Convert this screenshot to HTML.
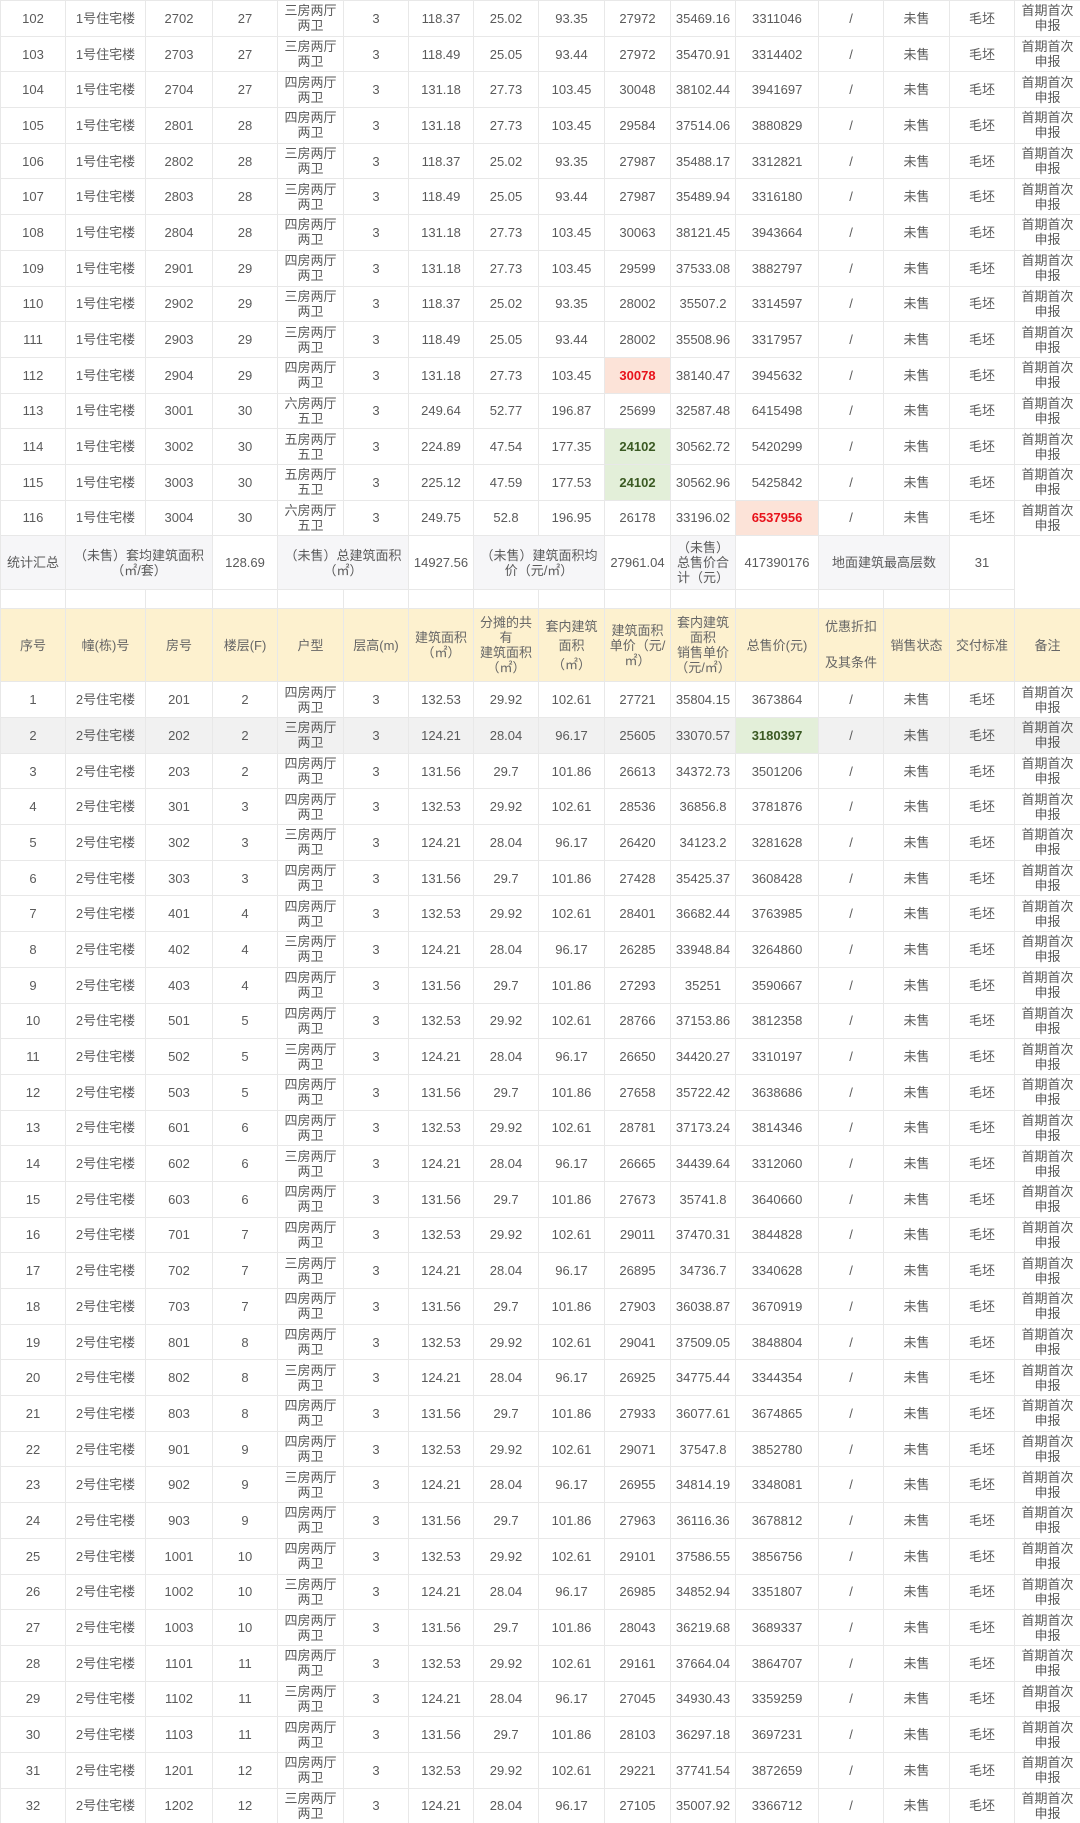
<!DOCTYPE html>
<html><head><meta charset="utf-8"><style>
html,body{margin:0;padding:0;background:#fff;width:1080px;height:1823px;overflow:hidden}
table{border-collapse:collapse;table-layout:fixed;width:1080px;font-family:"Liberation Sans","Noto Sans CJK SC",sans-serif;font-size:13px;color:#5a5a5a}
td{border:1px solid #e8e8e8;text-align:center;vertical-align:middle;padding:0;line-height:15px;overflow:hidden;white-space:nowrap}
tr{height:35.7px}
tr.s{height:54px}
tr.s td.l{background:#f6f6f8}
tr.b{height:19px}
tr.h{height:73px}
tr.h td{background:#fdf1cf;color:#666}
tr.g td{background:#f1f1f1}
.r{background:#fce3d8!important;color:#e8121b;font-weight:bold}
.gr{background:#e3efd9!important;color:#3b5a23;font-weight:bold}
</style></head><body>
<table>
<colgroup><col style="width:65px"><col style="width:80px"><col style="width:67px"><col style="width:65px"><col style="width:66px"><col style="width:65px"><col style="width:65px"><col style="width:65px"><col style="width:66px"><col style="width:66px"><col style="width:65px"><col style="width:83px"><col style="width:65px"><col style="width:66px"><col style="width:65px"><col style="width:66px"></colgroup>
<tr><td>102</td><td>1号住宅楼</td><td>2702</td><td>27</td><td>三房两厅<br>两卫</td><td>3</td><td>118.37</td><td>25.02</td><td>93.35</td><td>27972</td><td>35469.16</td><td>3311046</td><td>/</td><td>未售</td><td>毛坯</td><td>首期首次<br>申报</td></tr>
<tr><td>103</td><td>1号住宅楼</td><td>2703</td><td>27</td><td>三房两厅<br>两卫</td><td>3</td><td>118.49</td><td>25.05</td><td>93.44</td><td>27972</td><td>35470.91</td><td>3314402</td><td>/</td><td>未售</td><td>毛坯</td><td>首期首次<br>申报</td></tr>
<tr><td>104</td><td>1号住宅楼</td><td>2704</td><td>27</td><td>四房两厅<br>两卫</td><td>3</td><td>131.18</td><td>27.73</td><td>103.45</td><td>30048</td><td>38102.44</td><td>3941697</td><td>/</td><td>未售</td><td>毛坯</td><td>首期首次<br>申报</td></tr>
<tr><td>105</td><td>1号住宅楼</td><td>2801</td><td>28</td><td>四房两厅<br>两卫</td><td>3</td><td>131.18</td><td>27.73</td><td>103.45</td><td>29584</td><td>37514.06</td><td>3880829</td><td>/</td><td>未售</td><td>毛坯</td><td>首期首次<br>申报</td></tr>
<tr><td>106</td><td>1号住宅楼</td><td>2802</td><td>28</td><td>三房两厅<br>两卫</td><td>3</td><td>118.37</td><td>25.02</td><td>93.35</td><td>27987</td><td>35488.17</td><td>3312821</td><td>/</td><td>未售</td><td>毛坯</td><td>首期首次<br>申报</td></tr>
<tr><td>107</td><td>1号住宅楼</td><td>2803</td><td>28</td><td>三房两厅<br>两卫</td><td>3</td><td>118.49</td><td>25.05</td><td>93.44</td><td>27987</td><td>35489.94</td><td>3316180</td><td>/</td><td>未售</td><td>毛坯</td><td>首期首次<br>申报</td></tr>
<tr><td>108</td><td>1号住宅楼</td><td>2804</td><td>28</td><td>四房两厅<br>两卫</td><td>3</td><td>131.18</td><td>27.73</td><td>103.45</td><td>30063</td><td>38121.45</td><td>3943664</td><td>/</td><td>未售</td><td>毛坯</td><td>首期首次<br>申报</td></tr>
<tr><td>109</td><td>1号住宅楼</td><td>2901</td><td>29</td><td>四房两厅<br>两卫</td><td>3</td><td>131.18</td><td>27.73</td><td>103.45</td><td>29599</td><td>37533.08</td><td>3882797</td><td>/</td><td>未售</td><td>毛坯</td><td>首期首次<br>申报</td></tr>
<tr><td>110</td><td>1号住宅楼</td><td>2902</td><td>29</td><td>三房两厅<br>两卫</td><td>3</td><td>118.37</td><td>25.02</td><td>93.35</td><td>28002</td><td>35507.2</td><td>3314597</td><td>/</td><td>未售</td><td>毛坯</td><td>首期首次<br>申报</td></tr>
<tr><td>111</td><td>1号住宅楼</td><td>2903</td><td>29</td><td>三房两厅<br>两卫</td><td>3</td><td>118.49</td><td>25.05</td><td>93.44</td><td>28002</td><td>35508.96</td><td>3317957</td><td>/</td><td>未售</td><td>毛坯</td><td>首期首次<br>申报</td></tr>
<tr><td>112</td><td>1号住宅楼</td><td>2904</td><td>29</td><td>四房两厅<br>两卫</td><td>3</td><td>131.18</td><td>27.73</td><td>103.45</td><td class="r">30078</td><td>38140.47</td><td>3945632</td><td>/</td><td>未售</td><td>毛坯</td><td>首期首次<br>申报</td></tr>
<tr><td>113</td><td>1号住宅楼</td><td>3001</td><td>30</td><td>六房两厅<br>五卫</td><td>3</td><td>249.64</td><td>52.77</td><td>196.87</td><td>25699</td><td>32587.48</td><td>6415498</td><td>/</td><td>未售</td><td>毛坯</td><td>首期首次<br>申报</td></tr>
<tr><td>114</td><td>1号住宅楼</td><td>3002</td><td>30</td><td>五房两厅<br>五卫</td><td>3</td><td>224.89</td><td>47.54</td><td>177.35</td><td class="gr">24102</td><td>30562.72</td><td>5420299</td><td>/</td><td>未售</td><td>毛坯</td><td>首期首次<br>申报</td></tr>
<tr><td>115</td><td>1号住宅楼</td><td>3003</td><td>30</td><td>五房两厅<br>五卫</td><td>3</td><td>225.12</td><td>47.59</td><td>177.53</td><td class="gr">24102</td><td>30562.96</td><td>5425842</td><td>/</td><td>未售</td><td>毛坯</td><td>首期首次<br>申报</td></tr>
<tr><td>116</td><td>1号住宅楼</td><td>3004</td><td>30</td><td>六房两厅<br>五卫</td><td>3</td><td>249.75</td><td>52.8</td><td>196.95</td><td>26178</td><td>33196.02</td><td class="r">6537956</td><td>/</td><td>未售</td><td>毛坯</td><td>首期首次<br>申报</td></tr>
<tr class="s"><td class="l">统计汇总</td><td class="l" colspan="2">（未售）套均建筑面积<br>（㎡/套）</td><td>128.69</td><td class="l" colspan="2">（未售）总建筑面积<br>（㎡）</td><td>14927.56</td><td class="l" colspan="2">（未售）建筑面积均<br>价（元/㎡）</td><td>27961.04</td><td class="l">（未售）<br>总售价合<br>计（元）</td><td>417390176</td><td class="l" colspan="2">地面建筑最高层数</td><td>31</td><td rowspan="2" style="border-bottom:none"></td></tr>
<tr class="b"><td></td><td></td><td></td><td></td><td></td><td></td><td></td><td></td><td></td><td></td><td></td><td></td><td></td><td></td><td></td></tr>
<tr class="h"><td>序号</td><td>幢(栋)号</td><td>房号</td><td>楼层(F)</td><td>户型</td><td>层高(m)</td><td>建筑面积<br>（㎡）</td><td>分摊的共<br>有<br>建筑面积<br>（㎡）</td><td style="line-height:19px">套内建筑<br>面积<br>（㎡）</td><td>建筑面积<br>单价（元/<br>㎡）</td><td>套内建筑<br>面积<br>销售单价<br>（元/㎡）</td><td>总售价(元)</td><td style="line-height:36px">优惠折扣<br>及其条件</td><td>销售状态</td><td>交付标准</td><td>备注</td></tr>
<tr><td>1</td><td>2号住宅楼</td><td>201</td><td>2</td><td>四房两厅<br>两卫</td><td>3</td><td>132.53</td><td>29.92</td><td>102.61</td><td>27721</td><td>35804.15</td><td>3673864</td><td>/</td><td>未售</td><td>毛坯</td><td>首期首次<br>申报</td></tr>
<tr class="g"><td>2</td><td>2号住宅楼</td><td>202</td><td>2</td><td>三房两厅<br>两卫</td><td>3</td><td>124.21</td><td>28.04</td><td>96.17</td><td>25605</td><td>33070.57</td><td class="gr">3180397</td><td>/</td><td>未售</td><td>毛坯</td><td>首期首次<br>申报</td></tr>
<tr><td>3</td><td>2号住宅楼</td><td>203</td><td>2</td><td>四房两厅<br>两卫</td><td>3</td><td>131.56</td><td>29.7</td><td>101.86</td><td>26613</td><td>34372.73</td><td>3501206</td><td>/</td><td>未售</td><td>毛坯</td><td>首期首次<br>申报</td></tr>
<tr><td>4</td><td>2号住宅楼</td><td>301</td><td>3</td><td>四房两厅<br>两卫</td><td>3</td><td>132.53</td><td>29.92</td><td>102.61</td><td>28536</td><td>36856.8</td><td>3781876</td><td>/</td><td>未售</td><td>毛坯</td><td>首期首次<br>申报</td></tr>
<tr><td>5</td><td>2号住宅楼</td><td>302</td><td>3</td><td>三房两厅<br>两卫</td><td>3</td><td>124.21</td><td>28.04</td><td>96.17</td><td>26420</td><td>34123.2</td><td>3281628</td><td>/</td><td>未售</td><td>毛坯</td><td>首期首次<br>申报</td></tr>
<tr><td>6</td><td>2号住宅楼</td><td>303</td><td>3</td><td>四房两厅<br>两卫</td><td>3</td><td>131.56</td><td>29.7</td><td>101.86</td><td>27428</td><td>35425.37</td><td>3608428</td><td>/</td><td>未售</td><td>毛坯</td><td>首期首次<br>申报</td></tr>
<tr><td>7</td><td>2号住宅楼</td><td>401</td><td>4</td><td>四房两厅<br>两卫</td><td>3</td><td>132.53</td><td>29.92</td><td>102.61</td><td>28401</td><td>36682.44</td><td>3763985</td><td>/</td><td>未售</td><td>毛坯</td><td>首期首次<br>申报</td></tr>
<tr><td>8</td><td>2号住宅楼</td><td>402</td><td>4</td><td>三房两厅<br>两卫</td><td>3</td><td>124.21</td><td>28.04</td><td>96.17</td><td>26285</td><td>33948.84</td><td>3264860</td><td>/</td><td>未售</td><td>毛坯</td><td>首期首次<br>申报</td></tr>
<tr><td>9</td><td>2号住宅楼</td><td>403</td><td>4</td><td>四房两厅<br>两卫</td><td>3</td><td>131.56</td><td>29.7</td><td>101.86</td><td>27293</td><td>35251</td><td>3590667</td><td>/</td><td>未售</td><td>毛坯</td><td>首期首次<br>申报</td></tr>
<tr><td>10</td><td>2号住宅楼</td><td>501</td><td>5</td><td>四房两厅<br>两卫</td><td>3</td><td>132.53</td><td>29.92</td><td>102.61</td><td>28766</td><td>37153.86</td><td>3812358</td><td>/</td><td>未售</td><td>毛坯</td><td>首期首次<br>申报</td></tr>
<tr><td>11</td><td>2号住宅楼</td><td>502</td><td>5</td><td>三房两厅<br>两卫</td><td>3</td><td>124.21</td><td>28.04</td><td>96.17</td><td>26650</td><td>34420.27</td><td>3310197</td><td>/</td><td>未售</td><td>毛坯</td><td>首期首次<br>申报</td></tr>
<tr><td>12</td><td>2号住宅楼</td><td>503</td><td>5</td><td>四房两厅<br>两卫</td><td>3</td><td>131.56</td><td>29.7</td><td>101.86</td><td>27658</td><td>35722.42</td><td>3638686</td><td>/</td><td>未售</td><td>毛坯</td><td>首期首次<br>申报</td></tr>
<tr><td>13</td><td>2号住宅楼</td><td>601</td><td>6</td><td>四房两厅<br>两卫</td><td>3</td><td>132.53</td><td>29.92</td><td>102.61</td><td>28781</td><td>37173.24</td><td>3814346</td><td>/</td><td>未售</td><td>毛坯</td><td>首期首次<br>申报</td></tr>
<tr><td>14</td><td>2号住宅楼</td><td>602</td><td>6</td><td>三房两厅<br>两卫</td><td>3</td><td>124.21</td><td>28.04</td><td>96.17</td><td>26665</td><td>34439.64</td><td>3312060</td><td>/</td><td>未售</td><td>毛坯</td><td>首期首次<br>申报</td></tr>
<tr><td>15</td><td>2号住宅楼</td><td>603</td><td>6</td><td>四房两厅<br>两卫</td><td>3</td><td>131.56</td><td>29.7</td><td>101.86</td><td>27673</td><td>35741.8</td><td>3640660</td><td>/</td><td>未售</td><td>毛坯</td><td>首期首次<br>申报</td></tr>
<tr><td>16</td><td>2号住宅楼</td><td>701</td><td>7</td><td>四房两厅<br>两卫</td><td>3</td><td>132.53</td><td>29.92</td><td>102.61</td><td>29011</td><td>37470.31</td><td>3844828</td><td>/</td><td>未售</td><td>毛坯</td><td>首期首次<br>申报</td></tr>
<tr><td>17</td><td>2号住宅楼</td><td>702</td><td>7</td><td>三房两厅<br>两卫</td><td>3</td><td>124.21</td><td>28.04</td><td>96.17</td><td>26895</td><td>34736.7</td><td>3340628</td><td>/</td><td>未售</td><td>毛坯</td><td>首期首次<br>申报</td></tr>
<tr><td>18</td><td>2号住宅楼</td><td>703</td><td>7</td><td>四房两厅<br>两卫</td><td>3</td><td>131.56</td><td>29.7</td><td>101.86</td><td>27903</td><td>36038.87</td><td>3670919</td><td>/</td><td>未售</td><td>毛坯</td><td>首期首次<br>申报</td></tr>
<tr><td>19</td><td>2号住宅楼</td><td>801</td><td>8</td><td>四房两厅<br>两卫</td><td>3</td><td>132.53</td><td>29.92</td><td>102.61</td><td>29041</td><td>37509.05</td><td>3848804</td><td>/</td><td>未售</td><td>毛坯</td><td>首期首次<br>申报</td></tr>
<tr><td>20</td><td>2号住宅楼</td><td>802</td><td>8</td><td>三房两厅<br>两卫</td><td>3</td><td>124.21</td><td>28.04</td><td>96.17</td><td>26925</td><td>34775.44</td><td>3344354</td><td>/</td><td>未售</td><td>毛坯</td><td>首期首次<br>申报</td></tr>
<tr><td>21</td><td>2号住宅楼</td><td>803</td><td>8</td><td>四房两厅<br>两卫</td><td>3</td><td>131.56</td><td>29.7</td><td>101.86</td><td>27933</td><td>36077.61</td><td>3674865</td><td>/</td><td>未售</td><td>毛坯</td><td>首期首次<br>申报</td></tr>
<tr><td>22</td><td>2号住宅楼</td><td>901</td><td>9</td><td>四房两厅<br>两卫</td><td>3</td><td>132.53</td><td>29.92</td><td>102.61</td><td>29071</td><td>37547.8</td><td>3852780</td><td>/</td><td>未售</td><td>毛坯</td><td>首期首次<br>申报</td></tr>
<tr><td>23</td><td>2号住宅楼</td><td>902</td><td>9</td><td>三房两厅<br>两卫</td><td>3</td><td>124.21</td><td>28.04</td><td>96.17</td><td>26955</td><td>34814.19</td><td>3348081</td><td>/</td><td>未售</td><td>毛坯</td><td>首期首次<br>申报</td></tr>
<tr><td>24</td><td>2号住宅楼</td><td>903</td><td>9</td><td>四房两厅<br>两卫</td><td>3</td><td>131.56</td><td>29.7</td><td>101.86</td><td>27963</td><td>36116.36</td><td>3678812</td><td>/</td><td>未售</td><td>毛坯</td><td>首期首次<br>申报</td></tr>
<tr><td>25</td><td>2号住宅楼</td><td>1001</td><td>10</td><td>四房两厅<br>两卫</td><td>3</td><td>132.53</td><td>29.92</td><td>102.61</td><td>29101</td><td>37586.55</td><td>3856756</td><td>/</td><td>未售</td><td>毛坯</td><td>首期首次<br>申报</td></tr>
<tr><td>26</td><td>2号住宅楼</td><td>1002</td><td>10</td><td>三房两厅<br>两卫</td><td>3</td><td>124.21</td><td>28.04</td><td>96.17</td><td>26985</td><td>34852.94</td><td>3351807</td><td>/</td><td>未售</td><td>毛坯</td><td>首期首次<br>申报</td></tr>
<tr><td>27</td><td>2号住宅楼</td><td>1003</td><td>10</td><td>四房两厅<br>两卫</td><td>3</td><td>131.56</td><td>29.7</td><td>101.86</td><td>28043</td><td>36219.68</td><td>3689337</td><td>/</td><td>未售</td><td>毛坯</td><td>首期首次<br>申报</td></tr>
<tr><td>28</td><td>2号住宅楼</td><td>1101</td><td>11</td><td>四房两厅<br>两卫</td><td>3</td><td>132.53</td><td>29.92</td><td>102.61</td><td>29161</td><td>37664.04</td><td>3864707</td><td>/</td><td>未售</td><td>毛坯</td><td>首期首次<br>申报</td></tr>
<tr><td>29</td><td>2号住宅楼</td><td>1102</td><td>11</td><td>三房两厅<br>两卫</td><td>3</td><td>124.21</td><td>28.04</td><td>96.17</td><td>27045</td><td>34930.43</td><td>3359259</td><td>/</td><td>未售</td><td>毛坯</td><td>首期首次<br>申报</td></tr>
<tr><td>30</td><td>2号住宅楼</td><td>1103</td><td>11</td><td>四房两厅<br>两卫</td><td>3</td><td>131.56</td><td>29.7</td><td>101.86</td><td>28103</td><td>36297.18</td><td>3697231</td><td>/</td><td>未售</td><td>毛坯</td><td>首期首次<br>申报</td></tr>
<tr><td>31</td><td>2号住宅楼</td><td>1201</td><td>12</td><td>四房两厅<br>两卫</td><td>3</td><td>132.53</td><td>29.92</td><td>102.61</td><td>29221</td><td>37741.54</td><td>3872659</td><td>/</td><td>未售</td><td>毛坯</td><td>首期首次<br>申报</td></tr>
<tr><td>32</td><td>2号住宅楼</td><td>1202</td><td>12</td><td>三房两厅<br>两卫</td><td>3</td><td>124.21</td><td>28.04</td><td>96.17</td><td>27105</td><td>35007.92</td><td>3366712</td><td>/</td><td>未售</td><td>毛坯</td><td>首期首次<br>申报</td></tr>
</table>
</body></html>
